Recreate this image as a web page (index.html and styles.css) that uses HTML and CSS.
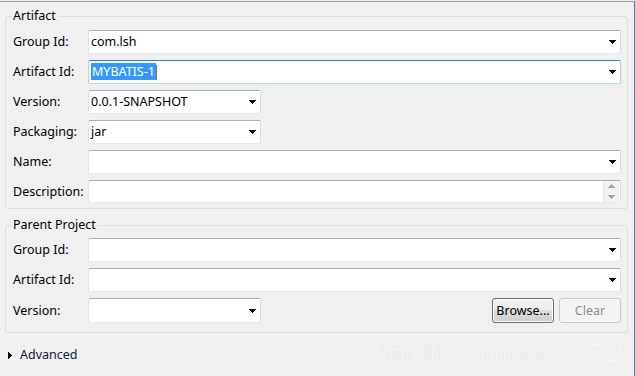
FILE: index.html
```html
<!DOCTYPE html>
<html>

<head>
    <meta charset="UTF-8">
    <title>New Maven Project</title>
    <link rel="stylesheet" href="styles.css">
</head>

<body>
    <div class="window">
        <!-- Artifact group -->
        <fieldset class="group group-artifact">
            <legend>Artifact</legend>
            <div class="rows">
                <label>Group Id:</label>
                <div class="field combo">
                    <span class="value">com.lsh</span>
                    <svg class="arrow" width="7" height="4" viewBox="0 0 7 4"><polygon points="0,0 7,0 4,4 3,4" /></svg>
                </div>

                <label>Artifact Id:</label>
                <div class="field combo focused">
                    <span class="value"><span class="selected">MYBATIS-1</span><span class="caret"></span></span>
                    <svg class="arrow" width="7" height="4" viewBox="0 0 7 4"><polygon points="0,0 7,0 4,4 3,4" /></svg>
                </div>

                <label>Version:</label>
                <div class="field combo short">
                    <span class="value">0.0.1-SNAPSHOT</span>
                    <svg class="arrow" width="7" height="4" viewBox="0 0 7 4"><polygon points="0,0 7,0 4,4 3,4" /></svg>
                </div>

                <label>Packaging:</label>
                <div class="field combo short">
                    <span class="value">jar</span>
                    <svg class="arrow" width="7" height="4" viewBox="0 0 7 4"><polygon points="0,0 7,0 4,4 3,4" /></svg>
                </div>

                <label>Name:</label>
                <div class="field combo">
                    <span class="value"></span>
                    <svg class="arrow" width="7" height="4" viewBox="0 0 7 4"><polygon points="0,0 7,0 4,4 3,4" /></svg>
                </div>

                <label>Description:</label>
                <div class="field textarea">
                    <span class="value"></span>
                    <div class="spinner">
                        <svg width="7" height="4" viewBox="0 0 7 4"><polygon points="3,0 4,0 7,4 0,4" /></svg>
                        <svg width="7" height="4" viewBox="0 0 7 4"><polygon points="0,0 7,0 4,4 3,4" /></svg>
                    </div>
                </div>
            </div>
        </fieldset>

        <!-- Parent project group -->
        <fieldset class="group group-parent">
            <legend>Parent Project</legend>
            <div class="rows">
                <label>Group Id:</label>
                <div class="field combo">
                    <span class="value"></span>
                    <svg class="arrow" width="7" height="4" viewBox="0 0 7 4"><polygon points="0,0 7,0 4,4 3,4" /></svg>
                </div>

                <label>Artifact Id:</label>
                <div class="field combo">
                    <span class="value"></span>
                    <svg class="arrow" width="7" height="4" viewBox="0 0 7 4"><polygon points="0,0 7,0 4,4 3,4" /></svg>
                </div>

                <label>Version:</label>
                <div class="version-row">
                    <div class="field combo short">
                        <span class="value"></span>
                        <svg class="arrow" width="7" height="4" viewBox="0 0 7 4"><polygon points="0,0 7,0 4,4 3,4" /></svg>
                    </div>
                    <button class="btn btn-default">Browse...</button>
                    <button class="btn" disabled>Clear</button>
                </div>
            </div>
        </fieldset>

        <div class="advanced">
            <svg width="4" height="7" viewBox="0 0 4 7"><polygon points="0,0 0,7 4,4 4,3" /></svg>
            <span>Advanced</span>
        </div>

        <div class="watermark">https://blog.csdn.net/qq_41407029</div>
    </div>
</body>

</html>
```

FILE: styles.css
```css
/* Basic reset */
* {
    margin: 0;
    padding: 0;
    box-sizing: border-box;
}

html,
body {
    width: 635px;
    height: 376px;
    background-color: #f0f0f0;
    overflow: hidden;
    font-family: "Noto Sans", sans-serif;
    font-size: 12.5px;
    color: #000;
}

.window {
    position: relative;
    width: 635px;
    height: 375px;
    margin-top: 1px;
    border-top: 1px solid #a0a0a0;
    border-right: 1px solid #6d7680;
}

/* Group boxes */
.group {
    margin: 0 6px 0 5px;
    border: 1px solid #d5dfe5;
    border-radius: 3px;
    padding: 0 6px 0 7px;
}

.group legend {
    margin-left: -2px;
    padding: 0 2px;
    line-height: 16px;
}

.group-artifact {
    margin-top: 6px;
}

.group-artifact .rows {
    padding: 6px 0 5px;
}

.group-parent {
    margin-top: 8px;
}

.group-parent .rows {
    padding: 5px 0 9px;
}

.rows {
    display: grid;
    grid-template-columns: 75px 1fr;
    row-gap: 6px;
    align-items: center;
}

.rows label {
    line-height: 16px;
}

/* Fields */
.field {
    position: relative;
    height: 24px;
    display: flex;
    align-items: center;
    background-color: #fff;
    border: 1px solid;
    border-color: #abadb3 #dbdfe6 #e3e9ef #e2e3ea;
    border-radius: 2px;
    padding-left: 2px;
}

.field .value {
    flex: 1;
    line-height: 16px;
    white-space: nowrap;
}

.field.short {
    width: 173px;
}

.field.focused {
    border-color: #3d7bad #b5cfe7 #b7d9ed #b5cfe7;
}

.field.textarea {
    height: 23px;
}

.arrow {
    margin-right: 4px;
    fill: #000;
    shape-rendering: crispEdges;
}

.selected {
    background-color: #3399ff;
    color: #fff;
    padding: 0 1px;
}

.caret {
    display: inline-block;
    width: 1px;
    height: 15px;
    vertical-align: middle;
    background-color: #b06a1a;
}

.spinner {
    width: 16px;
    height: 21px;
    margin-right: 1px;
    display: flex;
    flex-direction: column;
    align-items: center;
    justify-content: space-around;
    background-color: #f2f2f2;
    border-left: 1px solid #e6e6e6;
}

.spinner svg {
    fill: #a3a3a3;
    shape-rendering: crispEdges;
}

/* Version row with buttons */
.version-row {
    display: flex;
    align-items: center;
    gap: 5px;
}

.version-row .field {
    height: 25px;
    margin-right: auto;
}

.btn {
    width: 62px;
    height: 25px;
    font-family: "Noto Sans", sans-serif;
    font-size: 12.5px;
    border-radius: 3px;
}

.btn-default {
    color: #000;
    border: 1px solid #707070;
    background: linear-gradient(#f2f2f2, #ebebeb 50%, #dddddd 50%, #cfcfcf);
    box-shadow: inset 0 0 0 1px #fafafa;
}

.btn[disabled] {
    color: #8d8d8d;
    border: 1px solid #c5c9cc;
    background-color: #f4f4f4;
}

/* Advanced expander */
.advanced {
    display: flex;
    align-items: center;
    gap: 8px;
    margin: 14px 0 0 8px;
    line-height: 16px;
    color: #10203a;
}

.advanced svg {
    fill: #000;
    shape-rendering: crispEdges;
}

/* Blog watermark over the dialog */
.watermark {
    position: absolute;
    right: 8px;
    top: 336px;
    font-family: "Liberation Sans", sans-serif;
    font-size: 26px;
    line-height: 30px;
    color: rgba(255, 255, 255, 0.8);
    text-shadow: 0 0 1px rgba(0, 0, 0, 0.12);
    transform: scaleX(0.61);
    transform-origin: right center;
    white-space: nowrap;
}
```
